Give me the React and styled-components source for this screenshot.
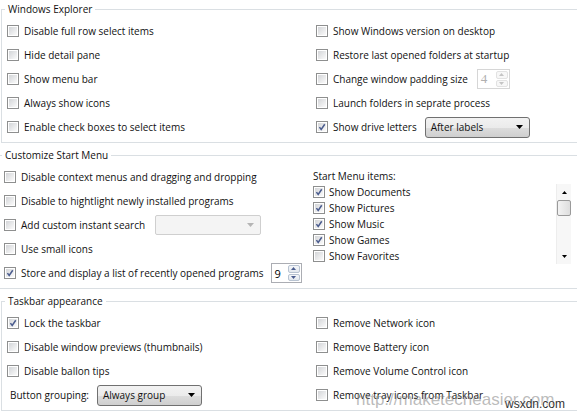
import React from 'react';
import styled, { createGlobalStyle } from 'styled-components';

const GlobalStyle = createGlobalStyle`
  html, body {
    margin: 0;
    padding: 0;
    background: #fff;
    overflow: hidden;
  }
  body {
    font-family: "Open Sans", "Noto Sans", sans-serif;
    font-size: 10px;
    color: #111;
  }
`;

const Page = styled.div`
  position: relative;
  width: 577px;
  height: 412px;
  overflow: hidden;
  padding-top: 1px;
  box-sizing: border-box;
`;

const Group = styled.fieldset`
  margin: ${p => p.$top || 0}px 0 0 ${p => p.$shift || 0}px;
  padding: 0;
  border: 1px solid #dadfe3;
  border-right: none;
  min-width: 0;
`;

const Legend = styled.legend`
  margin-left: 3px;
  padding: 0 3px;
  line-height: 16px;
  color: #111;
`;

const Columns = styled.div`
  display: grid;
  grid-template-columns: 309px 1fr;
  padding: 2px 0 3px 5px;
`;

const Column = styled.div`
  display: flex;
  flex-direction: column;
`;

const Row = styled.div`
  height: 24px;
  display: flex;
  align-items: center;
  white-space: nowrap;
`;

const CheckLabel = styled.label`
  display: flex;
  align-items: center;
  gap: ${p => p.$gap || 5}px;
  white-space: nowrap;
`;

const Box = styled.span`
  flex: none;
  width: 12px;
  height: 12px;
  box-sizing: border-box;
  padding: 1px;
  border: 1px solid #8e8f8f;
  background: linear-gradient(135deg, #d3d5d8, #fbfbfb) content-box, #fff;
  display: inline-flex;
  align-items: center;
  justify-content: center;
`;

const Check = ({ checked }) => (
  <Box>
    {checked && (
      <svg width="8" height="8" viewBox="0 0 9 9">
        <path d="M1.6 4.6 L3.6 7.2 L7.6 1.4" fill="none" stroke="#4a5c8e" strokeWidth="1.7" />
      </svg>
    )}
  </Box>
);

const CheckItem = ({ checked, children, gap }) => (
  <CheckLabel $gap={gap}>
    <Check checked={checked} />
    <span>{children}</span>
  </CheckLabel>
);

const Combo = styled.div`
  box-sizing: border-box;
  width: ${p => p.$w}px;
  height: ${p => p.$h || 21}px;
  margin-left: ${p => p.$gap ?? 12}px;
  display: flex;
  align-items: center;
  justify-content: space-between;
  padding: 0 6px 0 5px;
  border: 1px solid ${p => (p.$disabled ? '#cfcfcf' : '#707070')};
  border-radius: ${p => (p.$disabled ? 2 : 3)}px;
  background: ${p =>
    p.$disabled
      ? '#f4f4f4'
      : 'linear-gradient(#f2f2f2 0%, #ebebeb 50%, #dddddd 50%, #cfcfcf 100%)'};
  color: #111;
`;

const Arrow = ({ up, color = '#000' }) => (
  <svg width="7" height="4" viewBox="0 0 7 4">
    <path d={up ? 'M0 4 L3.5 0 L7 4 Z' : 'M0 0 L7 0 L3.5 4 Z'} fill={color} />
  </svg>
);

const Spin = styled.div`
  box-sizing: border-box;
  width: ${p => p.$w}px;
  height: 20px;
  margin-left: ${p => p.$gap}px;
  display: flex;
  border: 1px solid ${p => (p.$disabled ? '#d6d6d6' : '#abadb3')};
  background: #fff;
`;

const SpinValue = styled.div`
  flex: 1;
  display: flex;
  align-items: center;
  padding-left: 3px;
  font-family: ${p => (p.$disabled ? '"Liberation Serif", serif' : '"Open Sans", sans-serif')};
  font-size: ${p => (p.$disabled ? 13 : 11)}px;
  color: ${p => (p.$disabled ? '#b0b0b0' : '#000')};
`;

const SpinButtons = styled.div`
  width: 12px;
  display: flex;
  flex-direction: column;
  gap: 1px;
  padding: 1px 1px 1px 0;
`;

const SpinButton = styled.div`
  flex: 1;
  display: flex;
  align-items: center;
  justify-content: center;
  border: 1px solid ${p => (p.$disabled ? '#e2e2e2' : '#b8c3d1')};
  border-radius: 2px;
  background: ${p => (p.$disabled ? '#f7f7f7' : 'linear-gradient(#f4f6f9, #e3e8ee)')};
  svg { width: 5px; height: 3px; }
`;

const Spinner = ({ value, disabled, w, gap }) => {
  const c = disabled ? '#c4c4c4' : '#4a5c8e';
  return (
    <Spin $w={w} $gap={gap} $disabled={disabled}>
      <SpinValue $disabled={disabled}>{value}</SpinValue>
      <SpinButtons>
        <SpinButton $disabled={disabled}><Arrow up color={c} /></SpinButton>
        <SpinButton $disabled={disabled}><Arrow color={c} /></SpinButton>
      </SpinButtons>
    </Spin>
  );
};

const ListLabel = styled.div`
  margin-top: 3px;
  height: 16px;
  line-height: 16px;
`;

const List = styled.div`
  display: flex;
  width: 258px;
  height: 80px;
`;

const ListItems = styled.div`
  flex: 1;
  display: flex;
  flex-direction: column;
`;

const ListRow = styled.div`
  height: 16px;
  display: flex;
  align-items: center;
`;

const Scrollbar = styled.div`
  width: 14px;
  display: flex;
  flex-direction: column;
  background: #f7f7f7;
  border-left: 1px solid #ededed;
`;

const ScrollArrow = styled.div`
  height: 16px;
  display: flex;
  align-items: center;
  justify-content: center;
  svg { width: 5px; height: 3px; }
`;

const Thumb = styled.div`
  height: 14px;
  border: 1px solid #9a9a9a;
  border-radius: 2px;
  background: linear-gradient(to right, #f3f3f3, #dedede);
`;

const Track = styled.div`
  flex: 1;
`;

const Caption = styled.span`
  margin-left: 3px;
  margin-right: 8px;
`;

const Watermark = styled.div`
  position: absolute;
  left: 356px;
  top: 390px;
  font-family: "Liberation Sans", Arial, sans-serif;
  font-size: 17px;
  color: rgba(130, 130, 130, 0.55);
  white-space: nowrap;
  pointer-events: none;
`;

const Stamp = styled.div`
  position: absolute;
  left: 505px;
  top: 397px;
  font-family: "Liberation Sans", Arial, sans-serif;
  font-size: 12px;
  color: #333;
  text-shadow: 0 0 2px #fff, 0 0 2px #fff, 0 0 1px #fff;
  pointer-events: none;
`;

const startItems = [
  ['Show Documents', true],
  ['Show Pictures', true],
  ['Show Music', true],
  ['Show Games', true],
  ['Show Favorites', false],
];

export default function App() {
  return (
    <Page>
      <GlobalStyle />
      <Group $shift={1}>
        <Legend>Windows Explorer</Legend>
        <Columns>
          <Column>
            <Row><CheckItem>Disable full row select items</CheckItem></Row>
            <Row><CheckItem>Hide detail pane</CheckItem></Row>
            <Row><CheckItem>Show menu bar</CheckItem></Row>
            <Row><CheckItem>Always show icons</CheckItem></Row>
            <Row><CheckItem>Enable check boxes to select items</CheckItem></Row>
          </Column>
          <Column>
            <Row><CheckItem>Show Windows version on desktop</CheckItem></Row>
            <Row><CheckItem>Restore last opened folders at startup</CheckItem></Row>
            <Row>
              <CheckItem>Change window padding size</CheckItem>
              <Spinner value="4" disabled w={33} gap={9} />
            </Row>
            <Row><CheckItem>Launch folders in seprate process</CheckItem></Row>
            <Row>
              <CheckItem checked>Show drive letters</CheckItem>
              <Combo $w={105} $gap={8}>
                <span>After labels</span>
                <Arrow />
              </Combo>
            </Row>
          </Column>
        </Columns>
      </Group>

      <Group $top={4} $shift={-2}>
        <Legend>Customize Start Menu</Legend>
        <Columns>
          <Column>
            <Row><CheckItem>Disable context menus and dragging and dropping</CheckItem></Row>
            <Row><CheckItem>Disable to hightlight newly installed programs</CheckItem></Row>
            <Row>
              <CheckItem>Add custom instant search</CheckItem>
              <Combo $w={106} $h={20} $gap={10} $disabled>
                <span />
                <Arrow color="#b5b5b5" />
              </Combo>
            </Row>
            <Row><CheckItem>Use small icons</CheckItem></Row>
            <Row>
              <CheckItem checked>Store and display a list of recently opened programs</CheckItem>
              <Spinner value="9" w={31} gap={7} />
            </Row>
          </Column>
          <Column>
            <ListLabel>Start Menu items:</ListLabel>
            <List>
              <ListItems>
                {startItems.map(([label, on]) => (
                  <ListRow key={label}>
                    <CheckItem checked={on} gap={4}>{label}</CheckItem>
                  </ListRow>
                ))}
              </ListItems>
              <Scrollbar>
                <ScrollArrow><Arrow up /></ScrollArrow>
                <Thumb />
                <Track />
                <ScrollArrow><Arrow /></ScrollArrow>
              </Scrollbar>
            </List>
          </Column>
        </Columns>
      </Group>

      <Group $top={4} $shift={1}>
        <Legend>Taskbar appearance</Legend>
        <Columns>
          <Column>
            <Row><CheckItem checked>Lock the taskbar</CheckItem></Row>
            <Row><CheckItem>Disable window previews (thumbnails)</CheckItem></Row>
            <Row><CheckItem>Disable ballon tips</CheckItem></Row>
            <Row>
              <Caption>Button grouping:</Caption>
              <Combo $w={105} $gap={0}>
                <span>Always group</span>
                <Arrow />
              </Combo>
            </Row>
          </Column>
          <Column>
            <Row><CheckItem>Remove Network icon</CheckItem></Row>
            <Row><CheckItem>Remove Battery icon</CheckItem></Row>
            <Row><CheckItem>Remove Volume Control icon</CheckItem></Row>
            <Row><CheckItem>Remove tray icons from Taskbar</CheckItem></Row>
          </Column>
        </Columns>
      </Group>

      <Watermark>http://maketecheasier.com</Watermark>
      <Stamp>wsxdn.com</Stamp>
    </Page>
  );
}
